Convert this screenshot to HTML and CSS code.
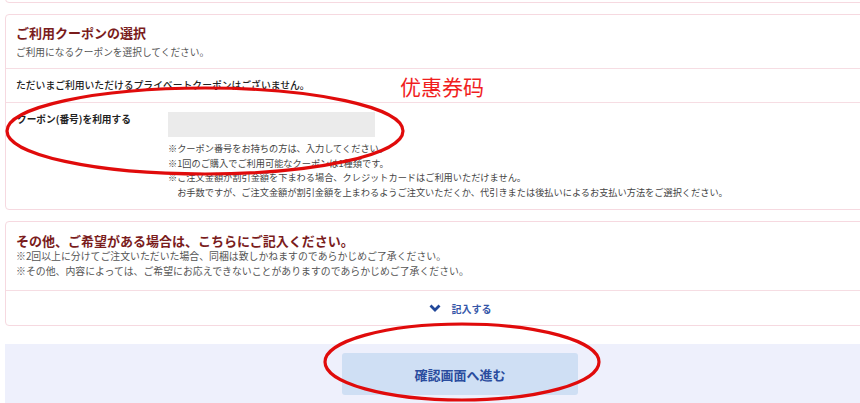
FILE: index.html
```html
<!DOCTYPE html>
<html>
   <head>
      <meta charset="UTF-8">
      <title>ご利用クーポンの選択</title>
      <link rel="stylesheet" href="styles.css">
   </head>
   <body>
    <div class="page">
      <div class="wrap">
        <div class="card stub"></div>

        <div class="card">
          <div class="card-head">
            <h2 class="card-title">ご利用クーポンの選択</h2>
            <p class="card-sub">ご利用になるクーポンを選択してください。</p>
          </div>
          <div class="card-row no-coupon">ただいまご利用いただけるプライベートクーポンはございません。</div>
          <div class="card-row coupon-row">
            <label for="coupon" class="coupon-label">クーポン(番号)を利用する</label>
            <div class="coupon-body">
              <input type="text" id="coupon" class="coupon-input">
              <ul class="coupon-notes">
                <li>※クーポン番号をお持ちの方は、入力してください。</li>
                <li>※1回のご購入でご利用可能なクーポンは1種類です。</li>
                <li>※ご注文金額が割引金額を下まわる場合、クレジットカードはご利用いただけません。</li>
                <li class="indent">お手数ですが、ご注文金額が割引金額を上まわるようご注文いただくか、代引きまたは後払いによるお支払い方法をご選択ください。</li>
              </ul>
            </div>
          </div>
        </div>

        <div class="card">
          <div class="card-head other-head">
            <h2 class="card-title">その他、ご希望がある場合は、こちらにご記入ください。</h2>
            <p class="other-note">※2回以上に分けてご注文いただいた場合、同梱は致しかねますのであらかじめご了承ください。</p>
            <p class="other-note">※その他、内容によっては、ご希望にお応えできないことがありますのであらかじめご了承ください。</p>
          </div>
          <div class="card-row toggle-row">
            <button type="button" class="toggle">
              <svg class="chevron" width="12" height="8" viewBox="0 0 12 8"><polyline points="1.5,1.5 6,6 10.5,1.5" fill="none" stroke="#22489a" stroke-width="2.8" stroke-linejoin="miter"/></svg>
              記入する
            </button>
          </div>
        </div>

        <div class="submit-band">
          <button type="button" class="submit">確認画面へ進む</button>
        </div>
      </div>

      <!-- annotations -->
      <span class="note-cn">优惠券码</span>
      <svg class="marks" width="860" height="403" viewBox="0 0 860 403">
        <ellipse cx="205" cy="131" rx="198" ry="43" fill="none" stroke="#e00b0b" stroke-width="3.2"/>
        <ellipse cx="462" cy="362" rx="137" ry="38" fill="none" stroke="#e00b0b" stroke-width="3.2"/>
      </svg>
    </div>
  </body>
</html>
```

FILE: styles.css
```css
html, body {
margin: 0;
padding: 0;
background-color: #fff;
}
body {
font-family: "Noto Sans CJK JP", "Liberation Sans", sans-serif;
color: #333;
overflow: hidden;
}
.page {
position: relative;
width: 860px;
height: 403px;
overflow: hidden;
}
.wrap {
width: 910px;
padding-left: 5px;
}
.card {
border: 1px solid #f6d9e0;
border-radius: 4px;
margin-top: 11px;
background-color: #fff;
}
.card.stub {
height: 10px;
margin-top: -9px;
}
.card-head {
padding: 9px 10px 9px;
}
.card-title {
margin: 0;
font-size: 13px;
line-height: 18px;
font-weight: 700;
color: #7a1c1c;
}
.card-sub {
margin: 3px 0 0;
font-size: 9.7px;
line-height: 14px;
color: #555;
}
.card-row {
border-top: 1px solid #f6dde3;
padding: 0 10px;
}
.no-coupon {
height: 33px;
line-height: 33px;
font-size: 9.8px;
font-weight: 500;
color: #222;
}
.coupon-row {
display: grid;
grid-template-columns: 152px 1fr;
padding-top: 9px;
padding-bottom: 10px;
}
.coupon-label {
font-size: 9.7px;
line-height: 14px;
font-weight: 700;
color: #222;
padding-left: 1px;
}
.coupon-input {
display: block;
width: 207px;
height: 25px;
box-sizing: border-box;
border: none;
background-color: #ebebeb;
margin: 0;
}
.coupon-notes {
list-style: none;
margin: 4px 0 0;
padding: 0;
font-size: 9.2px;
line-height: 14.5px;
color: #444;
}
.coupon-notes .indent {
padding-left: 9.2px;
}
.other-head {
padding-top: 11px;
padding-bottom: 11px;
}
.other-head .card-title {
line-height: 16px;
}
.other-note {
margin: 0;
font-size: 9.9px;
line-height: 15px;
color: #555;
}
.toggle-row {
height: 34px;
display: flex;
justify-content: center;
align-items: center;
}
.toggle {
display: flex;
align-items: center;
gap: 11px;
border: none;
background: none;
padding: 0;
font-family: "Noto Sans CJK JP", "Liberation Sans", sans-serif;
font-size: 10px;
font-weight: 700;
color: #3556a8;
}
.submit-band {
margin-top: 18px;
background-color: #eef0fc;
padding: 9px 0 12px;
display: flex;
justify-content: center;
}
.submit {
width: 236px;
height: 42px;
border: none;
border-radius: 3px;
background-color: #cfdff4;
font-family: "Noto Sans CJK JP", "Liberation Sans", sans-serif;
font-size: 13px;
font-weight: 700;
color: #2a4c9e;
}
.note-cn {
position: absolute;
left: 400px;
top: 72px;
font-family: "Noto Sans CJK SC", sans-serif;
font-size: 21px;
line-height: 28px;
color: #f01e1e;
}
.marks {
position: absolute;
left: 0;
top: 0;
pointer-events: none;
}
```
